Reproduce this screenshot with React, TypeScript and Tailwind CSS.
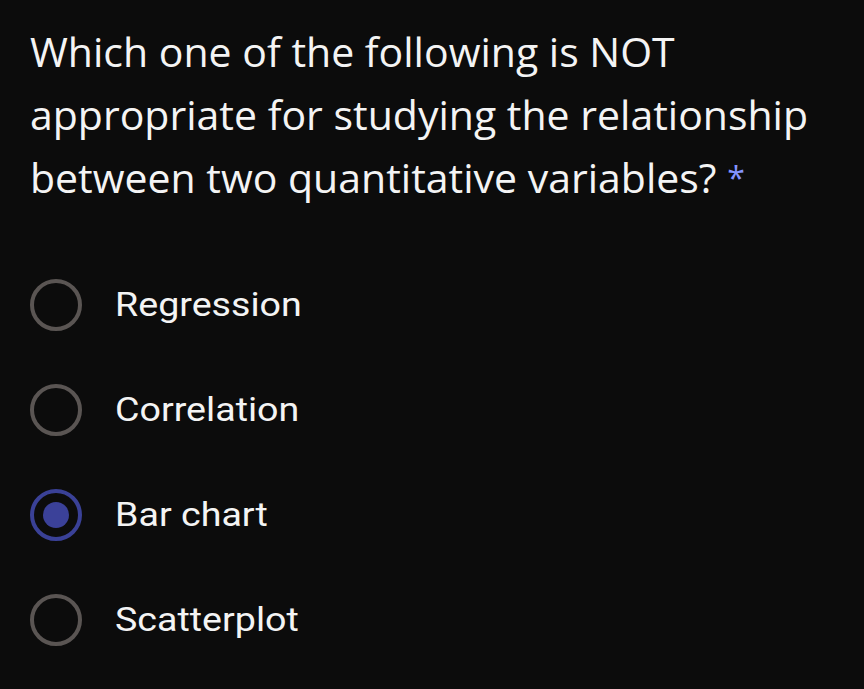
import { useState } from "react";

const options = ["Regression", "Correlation", "Bar chart", "Scatterplot"];

export default function App() {
  const [selected, setSelected] = useState("Bar chart");

  return (
    <div className="w-[864px] h-[689px] bg-[#0c0c0c] overflow-hidden">
      <div className="pl-[30px] pt-[20px]">
        <h1 className="text-[#f4f4f4] text-[41px] leading-[63px] font-['Open_Sans',sans-serif]">
          Which one of the following is NOT
          <br />
          appropriate for studying the relationship
          <br />
          between two quantitative variables?{" "}
          <span className="text-[#8494ff] text-[32px] align-top">*</span>
        </h1>
      </div>

      <div className="mt-[70px] pl-[30px] flex flex-col gap-[53px]">
        {options.map((o) => {
          const on = o === selected;
          return (
            <button
              key={o}
              onClick={() => setSelected(o)}
              className="flex items-center gap-[33px] text-left"
            >
              <span
                className={`w-[52px] h-[52px] rounded-full border-[4px] flex items-center justify-center ${
                  on ? "border-[#3a4197]" : "border-[#5a5553]"
                }`}
              >
                {on && <span className="w-[26px] h-[26px] rounded-full bg-[#3b4199]" />}
              </span>
              <span className="text-[#f4f4f4] text-[33px] leading-[52px] font-['Roboto',sans-serif] origin-left scale-x-[1.14]">
                {o}
              </span>
            </button>
          );
        })}
      </div>
    </div>
  );
}
